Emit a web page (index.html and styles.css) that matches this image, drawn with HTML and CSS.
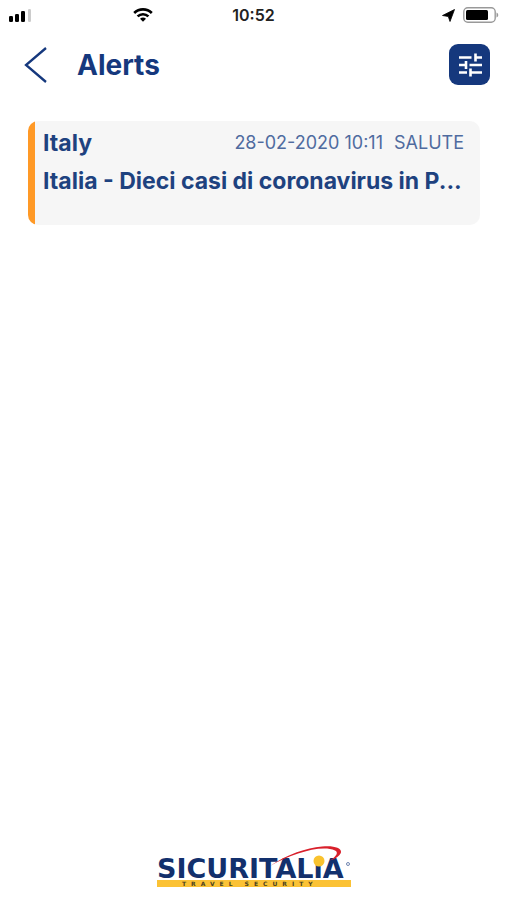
FILE: index.html
```html
<!DOCTYPE html>
<html lang="en">
<head>
<meta charset="utf-8">
<meta name="viewport" content="width=device-width, initial-scale=1">
<title>Alerts</title>
<link rel="stylesheet" href="styles.css">
</head>
<body>
<div class="status">
  <div class="status-left">
    <svg width="24" height="14" viewBox="0 0 24 14" aria-hidden="true">
      <rect x="1" y="8" width="4" height="6" rx="1.3"/>
      <rect x="7" y="6" width="4" height="8" rx="1.3"/>
      <rect x="13" y="3" width="4" height="11" rx="1.3"/>
      <rect x="20" y="1" width="3" height="13" rx="1.3" fill="#ccc"/>
    </svg>
    <svg width="20" height="14" viewBox="0 0 20 14" aria-hidden="true">
      <path d="M1.2 5a12.6 12.6 0 0 1 17.6 0M4.6 8.4a7.8 7.8 0 0 1 10.8 0" fill="none" stroke="#000" stroke-width="2.7"/>
      <path d="M7 10.8a4.4 4.4 0 0 1 6 0l-3 3z"/>
    </svg>
  </div>
  <time class="clock">10:52</time>
  <div class="status-right">
    <svg width="13" height="13" viewBox="0 0 13 13" aria-hidden="true"><path d="M12.500.500 8 12.500 6.300 7.500.500 6.500z" stroke="#000" stroke-width=".8" stroke-linejoin="round"/></svg>
    <svg width="36" height="16" viewBox="0 0 36 16" aria-hidden="true">
      <rect x=".8" y=".8" width="31.4" height="14.4" rx="4" fill="none" stroke="#999" stroke-width="1.4"/>
      <rect x="3" y="3" width="22" height="10" rx="1.5"/>
      <path d="M33.5 5.5c2.3.7 2.3 4.3 0 5z" fill="#999"/>
    </svg>
  </div>
</div>
<header class="bar">
  <button class="back" type="button" aria-label="Back">
    <svg width="24" height="38" viewBox="0 0 24 38"><path d="M22 2 2 19l20 17" fill="none" stroke="#15387d" stroke-width="2.300"/></svg>
  </button>
  <h1>Alerts</h1>
  <button class="filter" type="button" aria-label="Filter">
    <svg width="24" height="24" viewBox="0 0 24 24"><path d="M1 4.500h12.500M17.500 4.500H24M17.500.500v8M1 12h7M8 8v8M11.500 12H24M1 19.500h8M12.500 19.500H24M12.500 15.500v8" fill="none" stroke="#fff" stroke-width="2.600"/></svg>
  </button>
</header>
<main>
  <article class="alert">
    <div class="alert-top">
      <h2>Italy</h2>
      <div class="meta"><time>28-02-2020 10:11</time><span>SALUTE</span></div>
    </div>
    <p class="headline">Italia - Dieci casi di coronavirus in P...</p>
  </article>
</main>
<footer>
  <svg class="logo" width="196" height="44" viewBox="0 0 196 44" role="img" aria-label="Sicuritalia Travel Security">
    <rect x="1" y="35" width="194" height="7" fill="#fbc235"/>
    <text class="word" x="1" y="33">SICURITALiA</text>
    <circle cx="163" cy="16" r="5.500" fill="#f9c22e"/>
    <path d="M114 21C132 9 150 3 166 1.500c15-1.500 23 3 17 9-2 2-5 4-9 5 6-4 9-8 5-10-14-6-42 3-65 15.500z" fill="#d9202b"/>
    <text class="tag" x="26" y="41">TRAVEL SECURITY</text>
    <circle cx="192" cy="19" r="1.500" fill="none" stroke="#15387d" stroke-width=".6"/>
  </svg>
</footer>
</body>
</html>
```
FILE: styles.css
```css
* { box-sizing: border-box; }
body {
  margin: 0;
  min-height: 100vh;
  display: flex;
  flex-direction: column;
  background: #fff;
  color: #15387d;
  font-family: Inter, "Liberation Sans", sans-serif;
}
h1, h2, p { margin: 0; }
svg { display: block; }
button { border: 0; padding: 0; background: none; }
.status {
  display: grid;
  grid-template-columns: 1fr auto 1fr;
  align-items: center;
  height: 30px;
  padding: 0 8px;
}
.status-left { display: flex; gap: 101px; }
.status-right { display: flex; justify-content: flex-end; align-items: center; gap: 8px; }
.clock { font-size: 16px; font-weight: 600; color: #222; }
.bar {
  display: flex;
  align-items: center;
  height: 69px;
  padding: 0 17px 0 24px;
}
h1 { margin-left: 29px; font-size: 28px; font-weight: 700; line-height: 32px; }
.filter {
  display: flex;
  align-items: center;
  justify-content: center;
  width: 41px;
  height: 41px;
  margin-left: auto;
  border-radius: 9px;
  background: #15387d;
}
main { flex: 1; padding: 22px 27px 0 28px; }
.alert {
  height: 104px;
  padding: 8px 16px 0 15px;
  border-radius: 10px;
  background: linear-gradient(90deg, #ff9926 7px, #f6f6f6 7px);
  color: #1e427f;
}
.alert-top { display: flex; justify-content: space-between; align-items: center; }
h2 { font-size: 23px; font-weight: 700; line-height: 28px; }
.meta { display: flex; gap: 11px; font-size: 18px; font-weight: 400; line-height: 24px; color: #4f6b9f; }
.headline {
  margin-top: 10px;
  font-size: 23px;
  font-weight: 700;
  line-height: 28px;
  white-space: nowrap;
}
footer { display: flex; justify-content: center; padding-bottom: 11px; }
.word { font: 700 27px "DejaVu Sans", sans-serif; fill: #12306d; }
.tag { font: 700 6px "DejaVu Sans", sans-serif; letter-spacing: 5px; fill: #4b431f; }
```
